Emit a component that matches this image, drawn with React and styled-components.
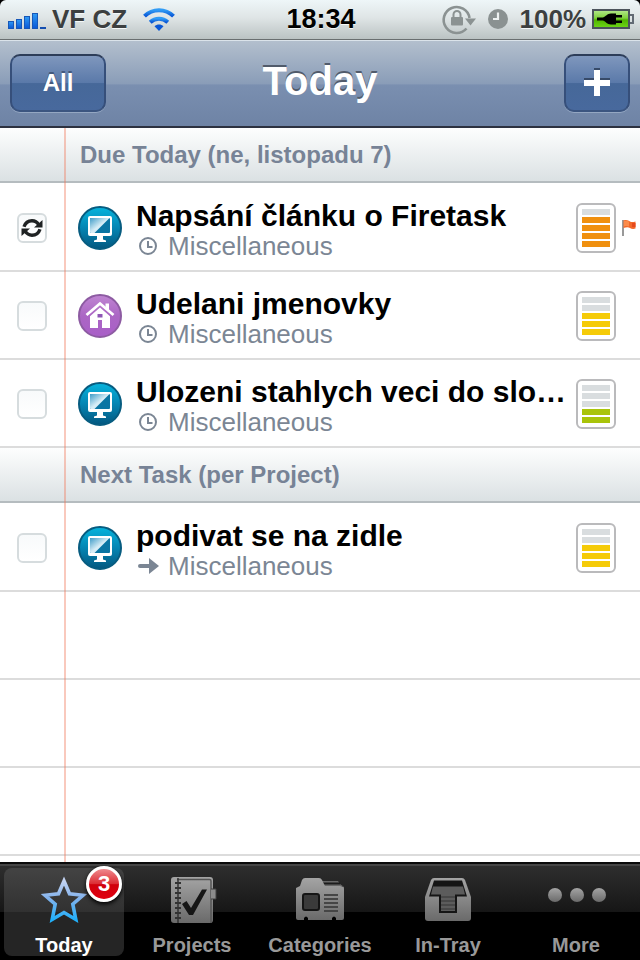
import { useState } from "react";
import styled, { createGlobalStyle } from "styled-components";

const GlobalStyle = createGlobalStyle`
  * {
    box-sizing: border-box;
  }
  body {
    margin: 0;
    background: #000;
    font-family: "Liberation Sans", Arial, Helvetica, sans-serif;
  }
  button, input {
    font-family: inherit;
    margin: 0;
    padding: 0;
  }
`;

const Screen = styled.div`
  min-height: 100vh;
  display: flex;
  flex-direction: column;
`;

const StatusBar = styled.header`
  height: 40px;
  padding: 0 6px 2px 8px;
  display: grid;
  grid-template-columns: 1fr auto 1fr;
  align-items: center;
  border-radius: 6px 6px 0 0;
  border-bottom: 1px solid #6a6f70;
  background: linear-gradient(#eef6f8, #dfe5e6 45%, #bbc3c3);
  font-size: 26px;
  line-height: 30px;
  font-weight: bold;
  color: #3c3f40;
  text-shadow: 0 1px 0 #f4f8f8;
`;

const StatusGroup = styled.div`
  display: flex;
  align-items: center;
  gap: ${(props) => props.$gap}px;
  justify-content: ${(props) => (props.$end ? "flex-end" : "flex-start")};
`;

const Carrier = styled.span`
  margin-right: 10px;
`;

const Clock = styled.time`
  color: #000;
  font-size: 27px;
`;

const NavBar = styled.div`
  height: 88px;
  padding: 0 10px 2px;
  display: grid;
  grid-template-columns: 1fr auto 1fr;
  align-items: center;
  border-top: 1px solid #dbe3ea;
  border-bottom: 2px solid #2c3140;
  background: linear-gradient(#b3bfcd, #8a9db8 50%, #7a8fb0 52%, #6e83a5);
`;

const Title = styled.h1`
  margin: 0;
  font-size: 40px;
  line-height: 46px;
  padding-bottom: 4px;
  color: #fff;
  text-shadow: 0 -2px 0 #515b6b;
`;

const NavButton = styled.button`
  width: ${(props) => props.$width}px;
  height: 58px;
  justify-self: ${(props) => (props.$right ? "end" : "start")};
  display: flex;
  align-items: center;
  justify-content: center;
  border: 2px solid;
  border-color: #2d3d59 #364f7a #3b5580;
  border-radius: 10px;
  background: linear-gradient(#7f97bd, #5a79a9 50%, #466899 51%, #48699d);
  box-shadow: 0 1px 0 #94a7c2;
  color: #fff;
  font-size: 24px;
  font-weight: bold;
  text-shadow: 0 -2px 0 #44597c;
`;

const List = styled.main`
  flex: 1;
  position: relative;
  display: flex;
  flex-direction: column;
  background: #fff;
  /* notebook margin */
  &::after {
    content: "";
    position: absolute;
    top: 0;
    bottom: 0;
    left: 64px;
    width: 2px;
    background: rgba(240, 120, 90, 0.4);
    pointer-events: none;
  }
`;

const SectionTitle = styled.h2`
  margin: 0 0 1px;
  height: 55px;
  padding-left: 80px;
  border-bottom: 2px solid #b5bcbf;
  background: linear-gradient(#fdfefe, #dbe1e3);
  font-size: 24px;
  line-height: 54px;
  color: #778396;
`;

const Tasks = styled.ul`
  margin: 0;
  padding: 0;
  list-style: none;
`;

const Row = styled.li`
  height: 88px;
  padding-top: 2px;
  display: flex;
  align-items: center;
  border-bottom: 2px solid #dcdcdc;
`;

const CheckCell = styled.label`
  width: 64px;
  display: grid;
  justify-content: center;
  align-items: center;
  > * {
    grid-area: 1 / 1;
  }
  svg {
    justify-self: center;
    pointer-events: none;
  }
`;

const Checkbox = styled.input`
  appearance: none;
  width: 30px;
  height: 30px;
  border: 2px solid #d6dcde;
  border-radius: 6px;
  background: linear-gradient(#f8fafb, #fff);
  &:checked {
    background: #cfe0f4;
  }
`;

const Badge = styled.span`
  width: 44px;
  height: 44px;
  margin: 0 14px;
  flex: none;
  svg {
    display: block;
  }
`;

const TaskText = styled.div`
  flex: 1;
  min-width: 0;
  padding-top: 4px;
`;

const TaskName = styled.div`
  font-size: 30px;
  line-height: 32px;
  font-weight: bold;
  color: #000;
  white-space: nowrap;
  overflow: hidden;
  text-overflow: ellipsis;
`;

const Project = styled.div`
  display: flex;
  align-items: center;
  gap: 8px;
  padding-left: 2px;
  font-size: 26px;
  line-height: 28px;
  color: #7b8694;
`;

const Gauge = styled.div`
  width: 40px;
  height: 50px;
  flex: none;
  margin-left: 8px;
  padding: 4px;
  display: flex;
  flex-direction: column;
  align-items: center;
  gap: 2px;
  border: 2px solid #bababc;
  border-radius: 6px;
`;

const Bar = styled.span`
  width: 28px;
  height: 6px;
  background: ${(props) => props.$fill};
`;

const FlagCell = styled.div`
  width: 24px;
  padding-left: 5px;
  svg {
    display: block;
  }
`;

const EmptyRows = styled.div`
  flex: 1;
  background: repeating-linear-gradient(#fff 0 86px, #dcdcdc 86px 88px);
`;

const TabBar = styled.nav`
  height: 98px;
  padding: 4px 0;
  display: grid;
  grid-template-columns: repeat(5, 1fr);
  border-top: 2px solid #0a0a0a;
  background: linear-gradient(#454545 0 2px, #2e2e2e 2px, #161616 48px, #000 48px);
`;

const Tab = styled.a`
  position: relative;
  height: 88px;
  margin: 0 4px;
  display: flex;
  flex-direction: column;
  align-items: center;
  justify-content: space-between;
  padding: 6px 0 0;
  border-radius: 8px;
  background: ${(props) => (props.$active ? "linear-gradient(#434343, #313131 44px, #252525 44px)" : "none")};
  color: ${(props) => (props.$active ? "#fff" : "#999")};
  font-size: 20px;
  line-height: 22px;
  font-weight: bold;
  text-decoration: none;
  white-space: nowrap;
`;

const Count = styled.span`
  position: absolute;
  top: -2px;
  right: 2px;
  width: 36px;
  height: 36px;
  border: 3px solid #fff;
  border-radius: 50%;
  background: linear-gradient(#ef8a8e, #dc2a32 50%, #d0000c 52%, #e00010);
  box-shadow: 0 2px 4px #000;
  text-align: center;
  font-size: 22px;
  line-height: 30px;
  color: #fff;
`;

const Signal = () => (
  <svg width="38" height="20" viewBox="0 0 38 20" overflow="visible">
    <defs>
      <linearGradient id="blue" x1="0" y1="0" x2="0" y2="1">
        <stop offset="0" stopColor="#2f9bf5" />
        <stop offset="1" stopColor="#0a57d6" />
      </linearGradient>
    </defs>
    <g fill="url(#blue)" stroke="#1757b8" strokeWidth="1">
      <rect x="0.5" y="12.500" width="5" height="7" />
      <rect x="8.500" y="10.500" width="5" height="9" />
      <rect x="16.500" y="7.500" width="5" height="12" />
      <rect x="24.500" y="4.500" width="5" height="15" />
    </g>
    <rect x="32" y="18" width="6" height="2" fill="#134eb0" />
  </svg>
);

const Wifi = () => (
  <svg width="32" height="24" viewBox="0 0 32 24">
    <g fill="none" stroke="url(#blue)" strokeWidth="4">
      <path d="M1.500 9.200C9.500 1.200 22.500 1.200 30.500 9.200" />
      <path d="M7.200 15.200c5-4.700 12.600-4.700 17.600 0" />
    </g>
    <path d="M16 24l-4.500-4.700c2.500-2.300 6.500-2.300 9 0z" fill="#0a57d6" />
  </svg>
);

const RotationLock = () => (
  <svg width="34" height="32" viewBox="0 0 34 32" overflow="visible">
    <path d="M24.500 25.500A13 13 0 1 1 27.500 15" fill="none" stroke="#8b9292" strokeWidth="2.600" />
    <path d="M23 15.500h11l-5.500 7z" fill="#8b9292" />
    <rect x="9" y="14" width="12" height="8.500" rx="1" fill="#8b9292" />
    <path d="M11.500 15v-3.500a3.500 3.500 0 0 1 7 0V15" fill="none" stroke="#8b9292" strokeWidth="2" />
  </svg>
);

const Alarm = () => (
  <svg width="20" height="22" viewBox="0 0 20 22">
    <circle cx="10" cy="11" r="10" fill="#8a9191" />
    <path d="M10 4.500V11H5" fill="none" stroke="#eef2f2" strokeWidth="2.200" />
  </svg>
);

const Battery = () => (
  <svg width="42" height="22" viewBox="0 0 42 22">
    <defs>
      <linearGradient id="charge" x1="0" y1="0" x2="0" y2="1">
        <stop offset="0" stopColor="#b5e88e" />
        <stop offset="0.450" stopColor="#7fd03c" />
        <stop offset="0.550" stopColor="#4fb400" />
        <stop offset="1" stopColor="#6fd818" />
      </linearGradient>
    </defs>
    <rect x="1" y="2" width="36" height="18" fill="url(#charge)" stroke="#4b535c" strokeWidth="2" />
    <path d="M38 7h3v8h-3" fill="none" stroke="#626a74" strokeWidth="2" />
    <path d="M5 9.500h6c3-1 4-4 8-4h5V7h6v2.500h-6v3h6V15h-6v1.500h-5c-4 0-5-3-8-4H5z" fill="#000" />
  </svg>
);

const Plus = () => (
  <svg width="26" height="30" viewBox="0 0 26 30">
    <path d="M10 0h6v10h10v6H16v10h-6V16H0v-6h10z" fill="#374a68" />
    <path d="M10 2h6v10h10v6H16v10h-6V18H0v-6h10z" fill="#fff" />
  </svg>
);

const Repeat = () => (
  <svg width="22" height="20" viewBox="0 0 22 20">
    <g id="turn">
      <path d="M3 8.800C4.300 5 7.200 2.800 11 2.800c3 0 5.200 1.400 6.800 4" fill="none" stroke="#1f2223" strokeWidth="3.400" />
      <path d="M21.500 2v7.500h-8.500z" fill="#1f2223" />
    </g>
    <use href="#turn" transform="rotate(180 11 10)" />
  </svg>
);

const Computer = () => (
  <svg width="44" height="44" viewBox="0 0 44 44">
    <defs>
      <linearGradient id="sea" x1="0" y1="0" x2="0" y2="1">
        <stop offset="0" stopColor="#06b4dd" />
        <stop offset="0.500" stopColor="#0585b3" />
        <stop offset="1" stopColor="#03577f" />
      </linearGradient>
      <linearGradient id="glass" x1="0" y1="0" x2="1" y2="1">
        <stop offset="0" stopColor="#3f9cc8" />
        <stop offset="0.500" stopColor="#d7edf6" />
      </linearGradient>
    </defs>
    <circle cx="22" cy="22" r="21" fill="url(#sea)" stroke="#075c80" strokeWidth="2" />
    <path d="M12 10h20a2 2 0 0 1 2 2v16a2 2 0 0 1-2 2h-7v3.500l3 1V36H16v-1.500l3-1V30h-7a2 2 0 0 1-2-2V12a2 2 0 0 1 2-2z" fill="#fff" />
    <rect x="12" y="12" width="20" height="15" rx="1" fill="#0a75a3" />
    <path d="M12 13a1 1 0 0 1 1-1h18.500L16.500 27H13a1 1 0 0 1-1-1z" fill="url(#glass)" />
  </svg>
);

const Home = () => (
  <svg width="44" height="44" viewBox="0 0 44 44">
    <defs>
      <linearGradient id="plum" x1="0" y1="0" x2="0" y2="1">
        <stop offset="0" stopColor="#bf85d2" />
        <stop offset="0.500" stopColor="#ab66c4" />
        <stop offset="1" stopColor="#a95fc8" />
      </linearGradient>
    </defs>
    <circle cx="22" cy="22" r="21" fill="url(#plum)" stroke="#8d5ba2" strokeWidth="2" />
    <path d="M8.500 21L22 9.500 35.500 21" fill="none" stroke="#fff" strokeWidth="2.800" />
    <path d="M27.500 9.500H31v8l-3.500-3z" fill="#fff" />
    <path d="M22 13.500l10 8.700V34h-8v-8h-4v8h-8V22.200z" fill="#fff" />
    <path d="M19.500 20h5v3.500h-5z" fill="#8e56b5" />
  </svg>
);

const SmallClock = () => (
  <svg width="22" height="22" viewBox="0 0 22 22">
    <circle cx="10" cy="11" r="8" fill="none" stroke="#7b8694" strokeWidth="2" />
    <path d="M10 6v6h4.500" fill="none" stroke="#7b8694" strokeWidth="2" />
  </svg>
);

const Arrow = () => (
  <svg width="22" height="22" viewBox="0 0 22 22">
    <path d="M2 9h9V3l10 8-10 8v-6H2a2 2 0 0 1 0-4z" fill="#7b8694" />
  </svg>
);

const Flag = () => (
  <svg width="16" height="18" viewBox="0 0 16 18">
    <path d="M2 1v16" stroke="#777" strokeWidth="1.500" />
    <path d="M2.500 1.500c3-1.200 5 0 6.500 1s3.500.5 5.500 0v7c-2 .8-4 .5-5.500-.5s-3.500-1-6.500 0z" fill="#f2682a" />
    <path d="M3 2c2-.7 3.500-.3 5 .6v5c-1.500-.8-3-.9-5-.2z" fill="#fb8b4a" />
    <path d="M11 4h3.500v4H11z" fill="#e5481c" />
  </svg>
);

const Star = () => (
  <svg width="50" height="50" viewBox="0 0 50 50">
    <defs>
      <linearGradient id="star" x1="0" y1="0" x2="0" y2="1">
        <stop offset="0" stopColor="#c3d3f2" />
        <stop offset="0.450" stopColor="#82b2ec" />
        <stop offset="1" stopColor="#22b0fa" />
      </linearGradient>
    </defs>
    <path
      d="M25 7L30.500 19.800 44 21.300 33.800 30.200 36.800 45.500 25 38.500 13.200 45.500 16.200 30.200 6 21.300 19.500 19.800z"
      fill="none"
      stroke="url(#star)"
      strokeWidth="3.600"
    />
  </svg>
);

const Metal = () => (
  <linearGradient id="metal" x1="0" y1="0" x2="0" y2="1">
    <stop offset="0" stopColor="#a4a4a4" />
    <stop offset="1" stopColor="#6a6a6a" />
  </linearGradient>
);

const Notebook = () => (
  <svg width="50" height="50" viewBox="0 0 50 50">
    <defs><Metal /></defs>
    <rect x="4" y="3" width="42" height="46" rx="3" fill="url(#metal)" />
    <path d="M10 5.500h32.500a1.500 1.500 0 0 1 1.500 1.500v42" fill="none" stroke="#555" strokeWidth="1.500" />
    <path d="M44 15h5v10h-5" fill="#8b8b8b" stroke="#404040" strokeWidth="1" />
    <path d="M11 4v45" stroke="#333" strokeWidth="1.500" />
    <path d="M8 9h6M8 14h6M8 19h6M8 24h6M8 29h6M8 34h6M8 39h6M8 44h6" stroke="#333" strokeWidth="2" />
    <path d="M15 30l4.500-3 4.500 7L35 15.500h5L26 41h-4z" fill="#161616" />
  </svg>
);

const Folders = () => (
  <svg width="50" height="50" viewBox="0 0 50 50">
    <path d="M27 7h16l2 3 4 3v8H29z" fill="#686868" />
    <path d="M28 9.500h17M30 13h18" stroke="#1c1c1c" strokeWidth="2" />
    <path d="M1 14l4-2 2-6q1-2 3-2h14q2 0 3 2l3 6h15q4 0 4 3v29q0 2-2 2h-6v-2q-2-3-4 0v2H13v-2q-2-3-4 0v2H3q-2 0-2-2z" fill="url(#metal)" />
    <rect x="8" y="20" width="16" height="16" rx="2" fill="#3a3a3a" stroke="#151515" strokeWidth="2" />
    <path d="M29 21h14M29 25h14M29 29h14M29 33h14M29 37h14" stroke="#454545" strokeWidth="2" />
  </svg>
);

const Tray = () => (
  <svg width="50" height="50" viewBox="0 0 50 50">
    <path d="M8 6q1-2 3-2h28q2 0 3 2l6 17v21q0 3-3 3H5q-3 0-3-3V23z" fill="url(#metal)" />
    <path d="M11 6.500h28l5 16H34V39H16V22.500H6z" fill="#151515" />
    <path d="M10 12.500h30l2 8H32V37H18V20.500H8z" fill="#5c5c5c" />
    <path d="M18 23h14M18 27h14M18 31h14M18 35h14" stroke="#424242" strokeWidth="1.500" />
  </svg>
);

const Dots = () => (
  <svg width="60" height="50" viewBox="0 0 60 50">
    <g fill="url(#metal)">
      <circle cx="9" cy="21" r="7" />
      <circle cx="31" cy="21" r="7" />
      <circle cx="53" cy="21" r="7" />
    </g>
  </svg>
);

const colors = { orange: "#f0900f", yellow: "#f5cb08", green: "#a9c40a" };

const sections = [
  {
    title: "Due Today (ne, listopadu 7)",
    tasks: [
      { name: "Napsání článku o Firetask", icon: Computer, mark: SmallClock, level: 4, color: "orange", repeat: true, flag: true },
      { name: "Udelani jmenovky", icon: Home, mark: SmallClock, level: 3, color: "yellow" },
      { name: "Ulozeni stahlych veci do slo…", icon: Computer, mark: SmallClock, level: 2, color: "green" },
    ],
  },
  {
    title: "Next Task (per Project)",
    tasks: [{ name: "podivat se na zidle", icon: Computer, mark: Arrow, level: 3, color: "yellow" }],
  },
];

const tabs = [
  { label: "Today", icon: Star, count: 3 },
  { label: "Projects", icon: Notebook },
  { label: "Categories", icon: Folders },
  { label: "In-Tray", icon: Tray },
  { label: "More", icon: Dots },
];

function Task({ task }) {
  const [done, setDone] = useState(false);
  const Icon = task.icon;
  const Mark = task.mark;
  return (
    <Row>
      <CheckCell>
        <Checkbox type="checkbox" aria-label={task.name} checked={done} onChange={() => setDone(!done)} />
        {task.repeat && <Repeat />}
      </CheckCell>
      <Badge><Icon /></Badge>
      <TaskText>
        <TaskName>{task.name}</TaskName>
        <Project><Mark />Miscellaneous</Project>
      </TaskText>
      <Gauge>
        {[5, 4, 3, 2, 1].map((n) => (
          <Bar key={n} $fill={n <= task.level ? colors[task.color] : "#d9dddf"} />
        ))}
      </Gauge>
      <FlagCell>{task.flag && <Flag />}</FlagCell>
    </Row>
  );
}

export default function App() {
  const [active, setActive] = useState("Today");
  return (
    <Screen>
      <GlobalStyle />
      <StatusBar>
        <StatusGroup $gap={6}>
          <Signal />
          <Carrier>VF CZ</Carrier>
          <Wifi />
        </StatusGroup>
        <Clock>18:34</Clock>
        <StatusGroup $gap={12} $end>
          <RotationLock />
          <Alarm />
          <StatusGroup $gap={6}>
            <span>100%</span>
            <Battery />
          </StatusGroup>
        </StatusGroup>
      </StatusBar>
      <NavBar>
        <NavButton type="button" $width={96}>All</NavButton>
        <Title>Today</Title>
        <NavButton type="button" $width={66} $right aria-label="Add task"><Plus /></NavButton>
      </NavBar>
      <List>
        {sections.map((section) => (
          <section key={section.title}>
            <SectionTitle>{section.title}</SectionTitle>
            <Tasks>
              {section.tasks.map((task) => <Task key={task.name} task={task} />)}
            </Tasks>
          </section>
        ))}
        <EmptyRows />
      </List>
      <TabBar>
        {tabs.map(({ label, icon: Icon, count }) => (
          <Tab key={label} href={`#${label}`} $active={active === label} onClick={() => setActive(label)}>
            <Icon />
            {label}
            {count && <Count>{count}</Count>}
          </Tab>
        ))}
      </TabBar>
    </Screen>
  );
}
